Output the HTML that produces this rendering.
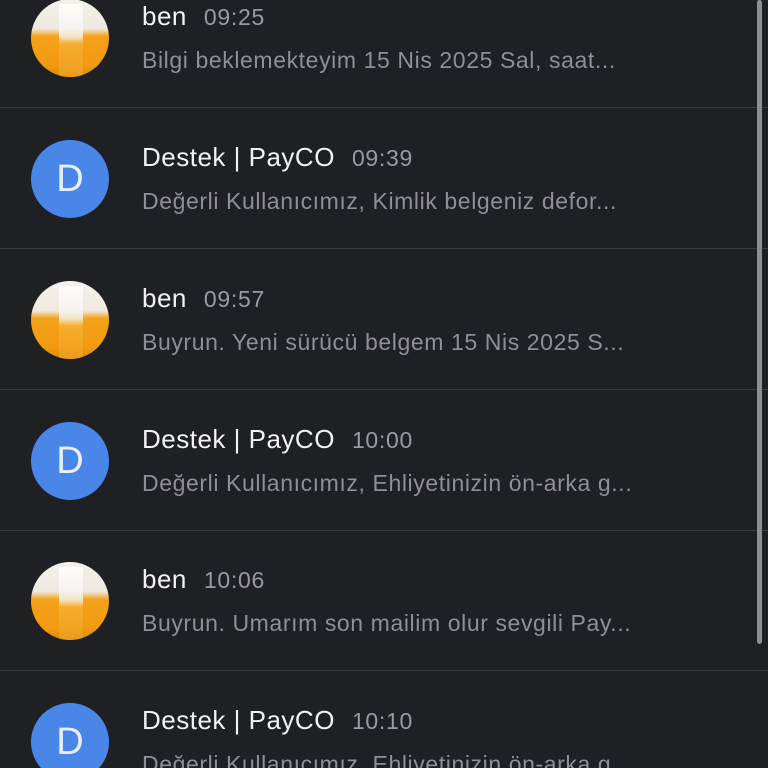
<!DOCTYPE html><html><head><meta charset="utf-8"><style>
html,body{margin:0;width:768px;height:768px;overflow:hidden}
body{background:#1f2024;font-family:"Liberation Sans",sans-serif;position:relative}
.row{position:absolute;left:0;width:768px;height:140px;border-bottom:1px solid #3b3c40}
.av{position:absolute;left:31px;top:32px;width:78px;height:78px;border-radius:50%;overflow:hidden}
.beer{background:linear-gradient(180deg,#f4f1ea 0%,#eeeae0 38%,#f3a21a 48%,#f39a10 85%,#d88a10 100%)}
.beer:before{content:"";position:absolute;left:28px;top:5px;width:24px;height:73px;background:linear-gradient(180deg,#fff 0,#f5f3ee 45%,#f6b030 55%,#eea020 100%);opacity:.8}
.d{background:#4a86e8;color:#e8eefc;font-size:38px;text-align:center;line-height:78px}
.n{position:absolute;left:142px;top:34px;font-size:26px;color:#f2f2f4;white-space:nowrap;letter-spacing:.5px}
.n span{color:#9a9aa0;font-size:23px;margin-left:17px;letter-spacing:.7px}
.p{position:absolute;left:142px;top:80px;font-size:23px;color:#8f8f95;white-space:nowrap;letter-spacing:.6px}
.sb{position:absolute;left:757px;top:0;width:5px;height:644px;border-radius:3px;background:#8e8e93}
</style></head><body>
<div class="row" style="top:-33px"><div class="av beer"></div><div class="n">ben<span>09:25</span></div><div class="p">Bilgi beklemekteyim 15 Nis 2025 Sal, saat...</div></div>
<div class="row" style="top:108px"><div class="av d">D</div><div class="n">Destek | PayCO<span>09:39</span></div><div class="p">Değerli Kullanıcımız, Kimlik belgeniz defor...</div></div>
<div class="row" style="top:249px"><div class="av beer"></div><div class="n">ben<span>09:57</span></div><div class="p">Buyrun. Yeni sürücü belgem 15 Nis 2025 S...</div></div>
<div class="row" style="top:390px"><div class="av d">D</div><div class="n">Destek | PayCO<span>10:00</span></div><div class="p">Değerli Kullanıcımız, Ehliyetinizin ön-arka g...</div></div>
<div class="row" style="top:530px"><div class="av beer"></div><div class="n">ben<span>10:06</span></div><div class="p">Buyrun. Umarım son mailim olur sevgili Pay...</div></div>
<div class="row" style="top:671px"><div class="av d">D</div><div class="n">Destek | PayCO<span>10:10</span></div><div class="p">Değerli Kullanıcımız, Ehliyetinizin ön-arka g...</div></div>
<div class="sb"></div>
</body></html>
